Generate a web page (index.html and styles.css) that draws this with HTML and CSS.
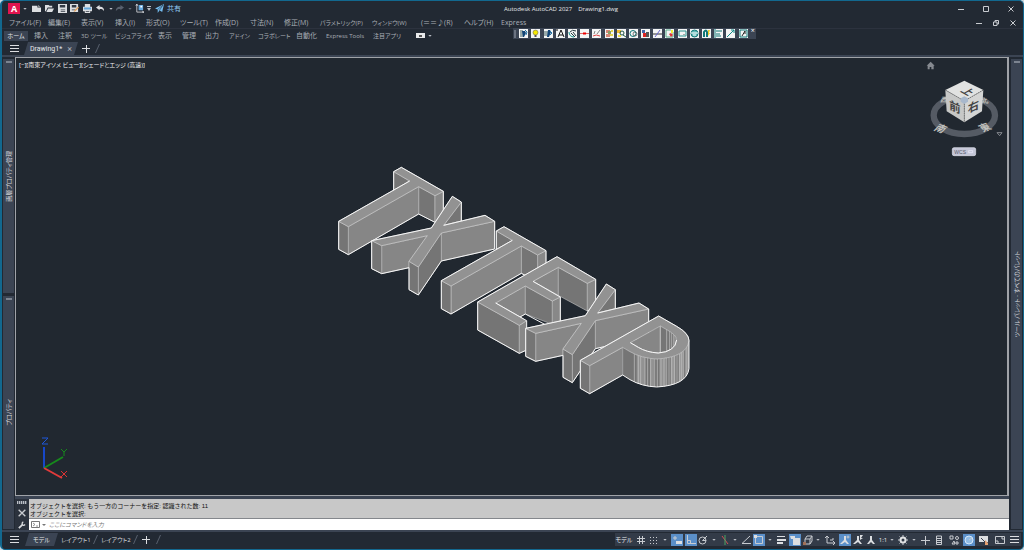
FILE: index.html
```html
<!DOCTYPE html>
<html lang="ja">
<head>
    <meta charset="UTF-8">
    <title>Autodesk AutoCAD 2027 Drawing1.dwg</title>
    <link rel="stylesheet" href="styles.css">
</head>
<body>
<div class="window">
    <header class="titlebar">
        <div class="quick">
            <button class="logo" aria-label="アプリケーション">A</button>
            <i class="caret"></i>
            <button aria-label="新規"><svg viewBox="0 0 10 10"><path class="w" d="M0 2h6v2h4v5H0z"/><path class="w" d="M7 1l2 2H7z"/></svg></button>
            <button aria-label="開く"><svg viewBox="0 0 10 10"><path class="w" d="M0 1h4l1 1h3v2H3L1 8H0zM3.500 5H10L8 9H1.500z"/></svg></button>
            <button aria-label="保存"><svg viewBox="0 0 10 10"><path class="w" d="M0 0h10v10H0z"/><path class="d" d="M2 1h6v3H2zM3 6h5v1H3zM3 8h5v1H3z"/></svg></button>
            <button aria-label="名前を付けて保存"><svg viewBox="0 0 10 10"><path class="w" d="M0 0h9v9H0z"/><path class="d" d="M2 1h5v3H2zM2 6h4v1H2z"/><path d="M4 9l1-2 4-4 1 1-4 4z" fill="#e3a15c"/></svg></button>
            <button aria-label="印刷"><svg viewBox="0 0 10 10"><path class="w" d="M2 0h6v3h2v5H8v2H2V8H0V3h2z"/><path d="M1 4h8v2H1z" fill="#65a9df"/><path class="d" d="M3 8h4v1H3z"/></svg></button>
            <button aria-label="元に戻す"><svg viewBox="0 0 10 10"><path class="w" d="M0 4l4-3v2c4 0 5 2 5 5C8 6 7 5.500 4 5.500V7z"/></svg></button>
            <i class="caret"></i>
            <button aria-label="やり直し"><svg viewBox="0 0 10 10"><path fill="#59616e" d="M10 4L6 1v2C2 3 1 5 1 8c1-2 2-2.500 5-2.500V7z"/></svg></button>
            <i class="caret dim"></i>
            <button aria-label="座標"><svg viewBox="0 0 10 10"><path class="l" d="M2 0v9h8M1 2l1-2 1 2M8 8l2 1-2 1"/><path d="M4 1h5v6H4z" fill="#65a9df"/><path d="M6 2h2v2H6z" fill="#fff"/></svg></button>
            <i class="caret bar"></i>
            <a class="share" href="#"><svg viewBox="0 0 10 10"><path fill="#74bdf0" d="M0 5l10-5-2 9-3-2-2 3V6z"/><path stroke="#222933" stroke-width=".6" d="M3 6l6-5-4 6"/></svg>共有</a>
        </div>
        <div class="caption"><span>Autodesk AutoCAD 2027</span><span>Drawing1.dwg</span></div>
        <div class="winbtns">
            <button aria-label="最小化"><svg viewBox="0 0 6 6"><path class="l" d="M0 3.500h6"/></svg></button>
            <button aria-label="最大化"><svg viewBox="0 0 6 6"><path class="l" d="M.5.5h5v5h-5z"/></svg></button>
            <button aria-label="閉じる"><svg viewBox="0 0 6 6"><path class="l" d="M.5.5l5 5m0-5l-5 5"/></svg></button>
        </div>
    </header>

    <nav class="menubar">
        <a href="#">ファイル(F)</a><a href="#">編集(E)</a><a href="#">表示(V)</a><a href="#">挿入(I)</a><a href="#">形式(O)</a><a href="#">ツール(T)</a><a href="#">作成(D)</a><a href="#">寸法(N)</a><a href="#">修正(M)</a><a class="kana" href="#">パラメトリック(P)</a><a class="kana" href="#">ウィンドウ(W)</a><a href="#">(＝＝♪(R)</a><a href="#">ヘルプ(H)</a><a href="#">Express</a>
        <div class="winbtns small">
            <button aria-label="図面を最小化"><svg viewBox="0 0 6 6"><path class="l" d="M0 3.500h6"/></svg></button>
            <button aria-label="図面を元に戻す"><svg viewBox="0 0 6 6"><path class="l" d="M.5 2h3.500v3.500H.5zM2 2V.5h3.500V4H4"/></svg></button>
            <button aria-label="図面を閉じる"><svg viewBox="0 0 6 6"><path class="l" d="M.5.5l5 5m0-5l-5 5"/></svg></button>
        </div>
    </nav>

    <nav class="ribbon">
        <a class="on" href="#">ホーム</a><a href="#">挿入</a><a href="#">注釈</a><a class="kana" href="#">3D ツール</a><a class="kana" href="#">ビジュアライズ</a><a href="#">表示</a><a href="#">管理</a><a href="#">出力</a><a class="kana" href="#">アドイン</a><a class="kana" href="#">コラボレート</a><a href="#">自動化</a><a class="kana" href="#">Express Tools</a><a class="kana" href="#">注目アプリ</a>
        <button class="panelbtn" aria-label="パネル表示"><i></i></button><i class="caret"></i>
        <div class="toolbar">
            <i class="grip"></i>
            <button aria-label="画層オフ"><svg viewBox="0 0 9 9"><path d="M1 1h3v7H1z" fill="#9aa"/><path d="M3 2h3l1 2-2 4H4z" fill="#147"/><path d="M6 1l2 2-1 3" stroke="#27a"/></svg></button>
            <button aria-label="画層オン"><svg viewBox="0 0 9 9"><circle cx="4.500" cy="3.500" r="2.500" fill="#f6e800" stroke="#555" stroke-width=".5"/><path d="M3.500 6h2v2h-2z" fill="#555"/></svg></button>
            <button aria-label="画層表示"><svg viewBox="0 0 9 9"><path d="M0 2h4v5H0z" fill="#9aa"/><path d="M4 1h2l1 2-2 5H3z" fill="#147"/><path d="M6 2l2 2-2 2" stroke="#27a"/></svg></button>
            <button aria-label="文字"><svg viewBox="0 0 9 9"><path d="M2 8l3-7 3 7M3 6h4" stroke="#111"/><path d="M0 1h2M1 0v2" stroke="#111" stroke-width=".6"/></svg></button>
            <button aria-label="文字フィット"><svg viewBox="0 0 9 9"><path d="M2 3q2-3 6-1M3 4l4 4M5 3l3 4" stroke="#263b40"/><path d="M1 3c0 3 2 5 5 5" stroke="#17938c"/></svg></button>
            <button aria-label="文字マスク"><svg viewBox="0 0 9 9"><path d="M0 4.500h9" stroke="#d66"/><path d="M3 3.500h3v2H3z" fill="#e00"/></svg></button>
            <button aria-label="弧に沿う文字"><svg viewBox="0 0 9 9"><path d="M2 5l1-3M5 5l3-4" stroke="#555" stroke-width=".7"/><path d="M1 7q3-2 7 0" stroke="#d44"/></svg></button>
            <button aria-label="属性"><svg viewBox="0 0 9 9"><path d="M1 1h4v3H1zM1 5h4v3H1z" fill="#d88777"/><path d="M6 1h2v2H6zM5 5h3v2H5z" fill="#e5d44c"/><path d="M3 2h3v3H3z" fill="#8a9e66"/></svg></button>
            <button aria-label="検索"><svg viewBox="0 0 9 9"><path d="M0 1h4v3H0z" fill="#eb3"/><circle cx="5" cy="4" r="2" stroke="#254"/><path d="M6 6l3 2" stroke="#254"/><path d="M1 6h3v2H1z" fill="#ed4"/></svg></button>
            <button aria-label="回転"><svg viewBox="0 0 9 9"><circle cx="4" cy="4.500" r="3" stroke="#177"/><circle cx="6" cy="5" r="2" stroke="#444" stroke-width=".7"/></svg></button>
            <button aria-label="ブロック"><svg viewBox="0 0 9 9"><path d="M1 1h3v3H1z" fill="#46a"/><path d="M2 4h4v4H2z" fill="#d22"/><path d="M5 3h3v5H5z" fill="#555"/></svg></button>
            <button aria-label="トリム"><svg viewBox="0 0 9 9"><path d="M0 5h9" stroke="#333"/><path d="M2 8l5-7" stroke="#66c"/></svg></button>
            <button aria-label="クリップ"><svg viewBox="0 0 9 9"><path d="M1 1h5l2 2v5H1z" stroke="#5a8"/><path d="M4 5l2-1 2 2-2 2z" fill="#d33"/><path d="M6 1h2v3H6z" fill="#ee3"/></svg></button>
            <button aria-label="ワイプアウト"><svg viewBox="0 0 9 9"><path d="M1 2h7v5H1z" stroke="#2a9490"/><path d="M5 5h2v1H5z" fill="#aaa"/></svg></button>
            <button aria-label="雲マーク"><svg viewBox="0 0 9 9"><circle cx="4.500" cy="4.500" r="3.500" fill="#6bb" stroke="#177"/><path d="M1 4h7M3 6h3" stroke="#fff"/></svg></button>
            <button aria-label="マグネット"><svg viewBox="0 0 9 9"><path d="M2 8V3q2-3 3 0v5" stroke="#177" stroke-width="2"/><path d="M6 1h2L7 4h1L6 7z" fill="#ec2"/></svg></button>
            <button aria-label="位置合わせ"><svg viewBox="0 0 9 9"><path d="M1 0v9M2 2h6M2 5h4M2 7h5" stroke="#177"/></svg></button>
            <button aria-label="延長"><svg viewBox="0 0 9 9"><path d="M1 8l7-7M5 1h3v3" stroke="#188"/></svg></button>
            <button aria-label="コマンド別名"><svg viewBox="0 0 9 9"><path d="M1 1h7v7H1z" stroke="#177"/><path d="M3 7l3-5v3" stroke="#222"/></svg></button>
            <button class="tbclose" aria-label="ツールバーを閉じる">×</button>
        </div>
    </nav>

    <nav class="filetabs">
        <button class="burger" aria-label="メニュー"><i></i><i></i><i></i></button>
        <a class="tab on drawing" href="#"><span>Drawing1*</span><b>×</b></a>
        <button class="plus" aria-label="新しいタブ"></button>
        <i class="slash"></i>
    </nav>

    <main class="work">
        <aside class="dock left">
            <section class="palette"><i class="handle"></i><h2>画層プロパティ管理</h2></section>
            <section class="palette second"><i class="handle"></i><h2>プロパティ</h2></section>
        </aside>

        <section class="view">
            <div class="vplabel">[−][南東アイソメ ビュー][シェードとエッジ (高速)]</div>

            <!-- extruded letters, southeast isometric -->
            <svg class="model" viewBox="18 3 1056 696">
                <defs>
                    <g id="letterT">
                        <path class="dark" d="M191 35l48 28-48 28z"/>
                        <path class="dark" d="M266 80l49 27v80l-49-25z"/>
                        <path class="mid" d="M315 107l25-13v79l-25 14z"/>
                        <path class="side" d="M55 200L266 80v82L55 284z"/>
                        <path class="dark" d="M26 184l29 16v84l-29-16z"/>
                        <path class="top" d="M26 184L239 63l-48-28 23-13 126 72-25 13-49-27L55 200z"/>
                        <path class="rim" d="M340 173V94L214 22l-23 13v56M239 63L26 184v84l29 16 211-122 49 25"/>
                    </g>
                    <g id="letterX">
                        <path class="dark" d="M394 126l-53 70 53-13z"/>
                        <path class="side" d="M334 219l160-35v83l-160 36z"/>
                        <path class="side" d="M155 257l137-30-55 77v19l-82 18z"/>
                        <path class="dark" d="M125 242l30 15v84l-30-15z"/>
                        <path class="dark" d="M265 321l69-102v84l-69 102z"/>
                        <path class="dark" d="M237 304l28 17v84l-28-16z"/>
                        <path class="top" d="M125 242l179-38 63-95 27 17-53 70 124-30 29 18-160 35-69 102-28-17 55-77-137 30z"/>
                        <path class="rim" d="M394 183v-57l-27-17-63 95-179 38v84l30 15 82-18v66l28 16 69-102 160-36v-83l-29-18-124 30"/>
                    </g>
                    <clipPath id="bowl"><path d="M458 382l22 13q35 20 80 22 90-5 97-55v84q-7 50-97 55-45-2-80-22l-22-14z"/></clipPath>
                    <clipPath id="hole"><path d="M481 368l90-50 21 12q28 15 28 30-4 35-55 39-35-2-60-17z"/></clipPath>
                </defs>

                <use href="#letterT"/>
                <use href="#letterX"/>
                <use href="#letterT" x="308" y="178"/>

                <g transform="translate(420 180)">
                    <path class="side" d="M189 184l76-42v84z"/>
                    <path class="dark" d="M265 142l87 48v83l-87-47z"/>
                    <path class="mid" d="M352 190l25-12v82l-25 13z"/>
                    <path class="side" d="M77 249l89-51v84l-16 9z"/>
                    <path class="dark" d="M166 198l81 45v70l-81-31z"/>
                    <path class="mid" d="M247 243l24-12v74l-24 8z"/>
                    <path class="dark" d="M23 246l125 70v84L23 330z"/>
                    <path class="mid" d="M148 316l22-14v88l-22 10z"/>
                    <path class="top" d="M23 246l238-136 116 68-25 12-87-48-76 42 82 47-24 12-81-45-89 51 93 53-22 14z"/>
                    <path class="gap" d="M156 292l10-8 58 30-54 13v-25z"/>
                    <path class="rim" d="M23 330v-84l238-136 116 68v82l-25 13M189 184l82 47v74M77 249l93 53v88l-22 10-125-70M150 291l16-9 60 32"/>
                </g>

                <use href="#letterX" x="462" y="263"/>

                <g transform="translate(420 180)">
                    <g clip-path="url(#bowl)">
                        <path class="dark" d="M450 300h210v220H450z"/>
                        <path d="M500 300h25v220h-25zM540 300h12v220h-12zM568 300h20v220h-20z" fill="#929292"/>
                        <path d="M602 300h14v220h-14zM626 300h14v220h-14zM647 300h10v220h-10z" fill="#999"/>
                        <path class="rib" d="M493 300v220m12-220v220m7-220v220m13-220v220m8-220v220m9-220v220m12-220v220m8-220v220m11-220v220m9-220v220m8-220v220m7-220v220m8-220v220m9-220v220m7-220v220m8-220v220m6-220v220m6-220v220m7-220v220"/>
                    </g>
                    <g clip-path="url(#hole)">
                        <path class="side" d="M475 310h96v90h-96z"/>
                        <path class="dark" d="M571 310h55v90h-55z"/>
                        <path class="rib" d="M571 310v90m19-90v90m9-90v90m6-90v90m6-90v90m4-90v90"/>
                    </g>
                    <path class="side" d="M359 437l99-55v83l-99 56z"/>
                    <path class="dark" d="M331 421l28 16v84l-28-16z"/>
                    <path class="top" fill-rule="evenodd" d="M331 421l235-133 54 31q37 21 37 43-7 50-97 55-45-2-80-22l-22-13-99 55zM481 368l24 14q25 15 60 17 51-4 55-39 0-15-28-30l-21-12z"/>
                    <path class="rim" d="M331 421l235-133 54 31q37 21 37 43v84q-7 50-97 55-45-2-80-22l-22-14-99 56-28-16zM481 368l24 14q25 15 60 17 51-4 55-39"/>
                </g>
            </svg>

            <!-- view cube and compass -->
            <svg class="cube" viewBox="84 20 228 306">
                <path fill="#868a90" d="M80 49l12-12 12 12h-3v11h-7v-7h-5v7h-6V49z"/>
                <ellipse cx="193" cy="198" rx="92" ry="56" fill="none" stroke="#555b64" stroke-width="19"/>
                <g class="compass">
                    <text transform="translate(120 158) skewX(-20)" font-size="20">西</text>
                    <text transform="translate(246 160) skewX(20)" font-size="20">北</text>
                    <text transform="translate(100 241) rotate(20) skewX(-24)" font-size="30">南</text>
                    <text transform="translate(249 248) rotate(-20) skewX(24)" font-size="30">東</text>
                </g>
                <path fill="#e1e2e1" d="M136 122l57-28 57 28-57 33z"/>
                <path fill="#c7c8c7" d="M136 122l57 33v64l-53-33z"/>
                <path fill="#d4d5d4" d="M250 122l-57 33v64l53-33z"/>
                <path d="M136 122l57 33 57-33M193 155v64" fill="none" stroke="#555" stroke-width="2" stroke-dasharray="5 2"/>
                <path fill="#a8b8cc" d="M182 147l11-6 11 6v10l-11 7-11-7z"/>
                <g class="face">
                    <text transform="translate(148 178) skewY(24)" font-size="34">前</text>
                    <text transform="translate(203 192) skewY(-24)" font-size="34">右</text>
                    <text transform="translate(180 126) rotate(30) skewX(-30)" font-size="29">上</text>
                </g>
                <path fill="none" stroke="#868a90" stroke-width="3" d="M291 250h15l-7 9z"/>
                <rect x="157" y="295" width="70" height="24" rx="5" fill="#c5c7d8" stroke="#e3e4ee" stroke-width="2"/>
                <text class="wcs" x="163" y="313">WCS</text>
                <path d="M206 304h12v6h-12z" fill="none" stroke="#eef" stroke-width="2"/>
            </svg>

            <svg class="ucs" viewBox="0 0 30 44">
                <path stroke="#1747c8" stroke-width="2" d="M4 31V10"/>
                <path stroke="#168a1c" stroke-width="2" d="M4 31l19-11"/>
                <path stroke="#e23b3b" stroke-width="2" d="M4 31l18 10"/>
                <path stroke="#1f56d8" d="M2 1h6L2 7h6"/>
                <path stroke="#168a1c" d="M21 12l3 3 3-3M24 15v4"/>
                <path stroke="#d33" d="M21 34l6 6m0-6l-6 6"/>
            </svg>
        </section>

        <aside class="dock right">
            <section class="palette"><i class="handle"></i><h2>ツール パレット - すべてのパレット</h2></section>
        </aside>

        <section class="command">
            <div class="cmdtools">
                <i class="grip"></i>
                <button aria-label="閉じる"><svg viewBox="0 0 6 6"><path class="l" d="M.5.5l5 5m0-5l-5 5"/></svg></button>
                <button aria-label="カスタマイズ"><svg viewBox="0 0 9 9"><path d="M1 8l4-4" stroke="#d8dadd" stroke-width="2"/><path d="M6 1q-2 1-1 3t3 0" stroke="#d8dadd" stroke-width="1.500"/></svg></button>
            </div>
            <div class="cmdbody">
                <div class="history">
                    <p>オブジェクトを選択: もう一方のコーナーを指定: 認識された数: 11</p>
                    <p>オブジェクトを選択:</p>
                </div>
                <label class="prompt">
                    <svg viewBox="0 0 15 9"><path d="M.5 1.500h8v6h-8z" stroke="#777"/><path d="M2 3l2 1.500L2 6M5 6h2" stroke="#777" stroke-width=".8"/><path d="M11 4h4l-2 2z" fill="#777"/></svg>
                    <input type="text" aria-label="コマンド" placeholder="ここにコマンドを入力">
                </label>
            </div>
        </section>
    </main>

    <footer class="status">
        <nav class="layouts">
            <button class="burger" aria-label="レイアウト一覧"><i></i><i></i><i></i></button>
            <a class="tab on" href="#"><span>モデル</span></a>
            <a class="layout" href="#">レイアウト1</a><i class="slash"></i>
            <a class="layout" href="#">レイアウト2</a><i class="slash"></i>
            <button class="plus" aria-label="新しいレイアウト"></button><i class="slash"></i>
        </nav>
        <div class="toggles">
            <button class="txt">モデル</button>
            <button aria-label="グリッド"><svg viewBox="0 0 10 10"><path class="l" d="M3.500 1v8M6.500 1v8M1 3.500h8M1 6.500h8"/></svg></button>
            <button aria-label="スナップ"><svg viewBox="0 0 10 10"><path class="l" stroke-dasharray="1 2" d="M1 2.500h8M1 5.500h8M1 8.500h8"/></svg></button>
            <i class="caret"></i>
            <button class="lit" aria-label="ダイナミック入力"><svg viewBox="0 0 10 10"><path class="l" d="M1 3h4M3 1v4"/><path class="w" d="M4 6h6v3H4z"/></svg></button>
            <button class="lit" aria-label="直交モード"><svg viewBox="0 0 10 10"><path class="l" d="M1.500 0v8.500H10M1.500 5.500h3v3"/></svg></button>
            <button aria-label="極トラッキング"><svg viewBox="0 0 10 10"><circle class="l" cx="4.500" cy="5.500" r="3.500"/><path class="l" d="M9 1L4.500 5.500H8"/></svg></button>
            <i class="caret"></i>
            <button aria-label="アイソメ作図"><svg viewBox="0 0 10 10"><path d="M2 1l6 8" stroke="#d34e55"/><path d="M5 0v10" stroke="#4aa565"/></svg></button>
            <i class="caret"></i>
            <button aria-label="トラッキング"><svg viewBox="0 0 10 10"><path class="l" d="M9 1L1 8.500h9"/></svg></button>
            <button class="lit" aria-label="オブジェクトスナップ"><svg viewBox="0 0 10 10"><path class="l" d="M1.500 1.500h7v7h-7z"/><path class="w" d="M0 0h3v3H0z"/></svg></button>
            <i class="caret"></i>
            <button aria-label="線の太さ"><svg viewBox="0 0 10 10"><path class="w" d="M1 1h8v1H1zM1 4h9v2H1zM1 7h6v2H1z"/></svg></button>
            <button class="lit" aria-label="選択の循環"><svg viewBox="0 0 10 10"><path class="w" d="M3 3h7v7H3zM0 1h5v3H1z"/></svg></button>
            <button aria-label="3D スナップ"><svg viewBox="0 0 10 10"><path class="l" d="M2 4h5v5H2zM2 4l2-3h5L7 4M9 1v5L7 9"/><path d="M0 7h3v3H0z" fill="#a07058"/></svg></button>
            <i class="caret"></i>
            <button aria-label="ダイナミック UCS"><svg viewBox="0 0 10 10"><path class="l" d="M2 1v7h8M0 3l2-2 2 2M5 5h3V3M8 6l2 2-2 2"/></svg></button>
            <button class="lit" aria-label="注釈の表示"><svg viewBox="0 0 10 10"><path class="w" d="M4 1h2v4l3 4H7L5 7 2 9H0l4-4z"/><circle class="l" cx="8" cy="2" r="1"/></svg></button>
            <button aria-label="自動尺度"><svg viewBox="0 0 10 10"><path class="w" d="M4 1h2v4l3 4H7L5 7 2 9H0l4-4zM7 0h3L8 3h2L7 5z"/></svg></button>
            <button aria-label="注釈尺度"><svg viewBox="0 0 10 10"><path class="w" d="M4 1h2v4l3 4H7L5 7 3 9H1l3-4z"/></svg></button>
            <button class="txt scale">1:1</button>
            <i class="caret"></i>
            <button aria-label="ワークスペース"><svg viewBox="0 0 10 10"><circle cx="5" cy="5" r="2.500" stroke="#e1e2e4" stroke-width="2"/><path class="l" d="M5 0v2M5 8v2M0 5h2M8 5h2M1.500 1.500l1 1M7.500 7.500l1 1M1.500 8.500l1-1M7.500 2.500l1-1"/></svg></button>
            <i class="caret"></i>
            <button aria-label="注釈モニター"><svg viewBox="0 0 10 10"><path class="l" d="M5.500 1v9M1 5.500h9"/></svg></button>
            <button aria-label="クイックプロパティ"><svg viewBox="0 0 10 10"><path class="l" d="M2.500 1v8.500h5V1zM2 3.500h6M2 5.500h6M2 7.500h6"/></svg></button>
            <button aria-label="オブジェクト選択表示"><svg viewBox="0 0 10 10"><path class="l" d="M1 1h3v3H1zM3 9l2-3 1 3z"/><circle class="l" cx="8" cy="3" r="1.500"/><path class="l" d="M7 7h2v2H7z"/></svg></button>
            <button class="lit" aria-label="グラフィックス"><svg viewBox="0 0 10 10"><circle cx="5" cy="5" r="4" fill="#91bce5" stroke="#d8e9fa"/><path class="l" d="M5 5l3-2"/></svg></button>
            <button aria-label="画面クリーン"><svg viewBox="0 0 10 10"><path class="w" d="M0 1h9v6H0z"/><path d="M2 3l4 4" stroke="#3b4453"/><path d="M6 5l3 3v2H6z" fill="#e6a070"/></svg></button>
            <button aria-label="フルスクリーン"><svg viewBox="0 0 10 10"><path class="l" d="M.5 1.500h9v7h-9zM2 5v2h2M6 3h2v2"/></svg></button>
            <button class="burger" aria-label="カスタマイズ"><i></i><i></i><i></i></button>
        </div>
    </footer>
</div>
</body>
</html>
```

FILE: styles.css
```css
* {
    box-sizing: border-box;
}
body {
    margin: 0;
    background: #c9d6de;
    font-family: "Open Sans", "Noto Sans CJK JP", sans-serif;
    font-size: 7px;
    line-height: 10px;
    color: #b9bdc4;
    font-feature-settings: "palt";
}
a {
    color: inherit;
    text-decoration: none;
    white-space: nowrap;
}
button {
    display: flex;
    align-items: center;
    justify-content: center;
    padding: 0;
    border: 0;
    background: none;
    color: inherit;
    font: inherit;
}
svg {
    display: block;
    fill: none;
}
.w { fill: #dcdee1; }
.d { fill: #353c47; }
.l { fill: none; stroke: #c8cbd0; }
.kana { font-size: 6px; }
.window {
    display: flex;
    flex-direction: column;
    height: 100vh;
    background: #222933;
    border: 1px solid #12688f;
    border-left-width: 2px;
    border-radius: 5px;
    overflow: hidden;
}
.caret {
    flex: none;
    width: 4px;
    height: 2px;
    background: #b9bdc4;
    clip-path: polygon(0 0, 100% 0, 60% 100%, 40% 100%);
}
.caret.dim { background: #656c77; }
.caret.bar {
    height: 5px;
    clip-path: polygon(0 0, 100% 0, 100% 20%, 0 20%, 0 40%, 100% 40%, 50% 100%, 0 40%);
}

/* title bar */
.titlebar {
    display: grid;
    grid-template-columns: 49% auto 1fr;
    align-items: center;
    height: 15px;
    padding: 0 9px 0 6px;
}
.quick {
    display: grid;
    grid-template-columns: 15px 9px 13px 13px 12px 13px 13px 13px 6px 13px 7px 12px 8px 24px;
    align-items: center;
}
.quick svg {
    width: 9px;
    height: 9px;
}
.quick button {
    justify-content: flex-start;
}
.quick .logo {
    width: 12px;
    height: 11px;
    justify-content: center;
    background: #e2144f;
    color: #fff;
    font-weight: bold;
    font-size: 9px;
}
.share {
    display: flex;
    align-items: center;
    gap: 3px;
    color: #91c9f2;
}
.share svg { flex: none; }
.caption {
    display: flex;
    gap: 6px;
    padding-left: 3px;
    color: #e6e8ea;
    font-size: 6px;
}
.winbtns {
    display: flex;
    justify-content: flex-end;
    gap: 19px;
}
.winbtns svg {
    width: 6px;
    height: 6px;
}
.winbtns.small {
    gap: 11px;
}

/* menus */
.menubar {
    display: grid;
    grid-template-columns: 39px 33px 34px 31px 34px 35px 35px 34px 36px 52px 49px 43px 37px 40px 1fr;
    align-items: center;
    height: 13px;
    padding: 1px 7px 0;
    border-bottom: 1px solid #2c323e;
    color: #a9aeb5;
}
.ribbon {
    position: relative;
    display: grid;
    grid-template-columns: 30px 24px 23px 34px 43px 24px 23px 24px 29px 38px 30px 47px 43px 12px 8px;
    align-items: center;
    height: 13px;
    padding-left: 2px;
    color: #a9aeb5;
}
.ribbon .on {
    justify-self: start;
    width: 24px;
    background: #3b4453;
    color: #e1e3e6;
    font-size: 6px;
    text-align: center;
}
.panelbtn {
    width: 9px;
    height: 5px;
    background: #e8e9eb;
}
.panelbtn i {
    width: 3px;
    height: 2px;
    background: #555;
}
/* floating express toolbar, sits across the ribbon edge */
.toolbar {
    position: absolute;
    left: 511px;
    top: -1px;
    display: flex;
    align-items: center;
    justify-content: space-between;
    width: 243px;
    height: 11px;
    padding: 0 1px;
    background: #3b4453;
}
.toolbar .grip {
    width: 2px;
    height: 8px;
    background: #6b7381;
}
.toolbar button {
    width: 9px;
    height: 9px;
    background: #f4f5f5;
}
.toolbar svg {
    width: 9px;
    height: 9px;
}
.toolbar .tbclose {
    align-self: flex-start;
    width: 4px;
    height: 5px;
    background: none;
    color: #fff;
}

/* drawing tabs */
.filetabs,
.layouts {
    display: flex;
    align-items: center;
}
.filetabs {
    height: 13px;
    padding-left: 8px;
}
.burger {
    flex-direction: column;
    gap: 2px;
    width: 9px;
}
.burger i {
    width: 9px;
    height: 1px;
    background: #dcdee1;
}
.tab {
    display: flex;
    align-items: center;
    justify-content: center;
    gap: 5px;
    height: 13px;
    background: #3b4453;
    color: #e6e8ea;
    clip-path: polygon(4px 0, 100% 0, calc(100% - 4px) 100%, 0 100%);
}
.tab b {
    color: #aeb3ba;
    font-size: 9px;
    font-weight: normal;
}
.drawing {
    width: 54px;
    margin: 0 4px 0 5px;
    font-family: Roboto, sans-serif;
}
.plus {
    width: 8px;
    height: 8px;
    background:
        linear-gradient(#dcdee1, #dcdee1) center / 8px 1px no-repeat,
        linear-gradient(#dcdee1, #dcdee1) center / 1px 8px no-repeat;
}
.slash {
    width: 5px;
    height: 9px;
    background: #59616e;
    clip-path: polygon(80% 0, 100% 0, 20% 100%, 0 100%);
}
.filetabs .slash { margin-left: 5px; }

/* work area */
.work {
    flex: 1;
    display: grid;
    grid-template-columns: 13px 1fr 14px;
    grid-template-rows: 1fr 34px;
    min-height: 0;
    border-top: 2px solid #3b4453;
    border-bottom: 2px solid #3b4453;
}
.dock {
    display: flex;
    flex-direction: column;
    gap: 3px;
    grid-row: 1 / 3;
    padding: 2px 1px 1px;
}
.dock.left { grid-column: 1; }
.dock.right {
    grid-column: 3;
    padding-left: 2px;
}
.palette {
    flex: 233;
    position: relative;
    display: flex;
    align-items: center;
    justify-content: center;
    background: #3b4453;
}
.palette.second { flex: 232; }
.handle {
    position: absolute;
    top: 2px;
    left: 3px;
    width: 6px;
    height: 2px;
    background: #7c8490;
}
.palette h2 {
    margin: 0;
    font-size: 6px;
    font-weight: normal;
    color: #d5d8dc;
    white-space: nowrap;
    writing-mode: vertical-rl;
    text-orientation: sideways;
    transform: rotate(180deg);
}
.view {
    grid-column: 2;
    grid-row: 1;
    position: relative;
    display: grid;
    place-items: center;
    border: 1px solid #a0a3a8;
    border-right-width: 2px;
    background: #212830;
}
.vplabel {
    position: absolute;
    left: 3px;
    top: 2px;
    color: #f0f1f2;
    font-size: 6px;
}
.model {
    width: 352px;
    height: 232px;
    overflow: visible;
    stroke-linejoin: round;
}
.model .top { fill: #929292; stroke: #d2d2d2; stroke-width: 2; }
.model .side { fill: #868686; stroke: #c0c0c0; stroke-width: 2; }
.model .mid { fill: #888; stroke: #c0c0c0; stroke-width: 2; }
.model .dark { fill: #757575; stroke: #c0c0c0; stroke-width: 2; }
.model .rim { stroke: #f6f6f6; stroke-width: 3; }
.model .rib { stroke: #c4c4c4; stroke-width: 2; }
.model .gap { fill: #212830; }
.cube {
    position: absolute;
    right: 3px;
    top: -2px;
    width: 76px;
    height: 102px;
    overflow: visible;
}
.cube text { font-family: "Noto Sans CJK JP", sans-serif; }
.compass { fill: #c2c2be; font-weight: bold; }
.face { fill: #444; font-weight: bold; }
.cube .wcs {
    fill: #555a6a;
    font-size: 15px;
    font-family: "Liberation Sans", sans-serif;
}
.ucs {
    position: absolute;
    left: 24px;
    bottom: 14px;
    width: 30px;
    height: 44px;
}

/* command line */
.command {
    grid-column: 2;
    grid-row: 2;
    display: flex;
    border-top: 3px solid #3b4453;
}
.cmdtools {
    display: flex;
    flex-direction: column;
    align-items: center;
    justify-content: space-between;
    width: 14px;
    padding: 2px 0 1px;
    background: #2b323d;
}
.cmdtools .grip {
    width: 10px;
    height: 3px;
    background: repeating-linear-gradient(90deg, #b9bdc4 0 1px, #59616e 1px 2px);
}
.cmdtools svg { width: 8px; height: 8px; }
.cmdbody {
    flex: 1;
    display: flex;
    flex-direction: column;
}
.history {
    display: flex;
    flex-direction: column;
    justify-content: flex-end;
    height: 20px;
    background: #c8c8c8;
    border-bottom: 1px solid #84878c;
    color: #111;
    font-family: "Liberation Sans", "Noto Sans CJK JP", sans-serif;
    font-size: 6px;
    line-height: 8px;
    font-feature-settings: normal;
}
.history p {
    margin: 0 1px;
}
.prompt {
    flex: 1;
    display: flex;
    align-items: center;
    gap: 3px;
    padding-left: 2px;
    background: #fff;
}
.prompt svg {
    width: 15px;
    height: 9px;
}
.prompt input {
    flex: 1;
    height: 10px;
    padding: 0;
    border: 0;
    outline: 0;
    background: none;
    font: italic 6px "Noto Sans CJK JP", sans-serif;
    font-feature-settings: "palt";
}
.prompt input::placeholder {
    color: #777;
}

/* status bar */
.status {
    display: flex;
    justify-content: space-between;
    align-items: center;
    height: 17px;
    padding: 0 2px 2px 8px;
}
.layouts .tab {
    width: 33px;
    margin: 0 3px 0 6px;
}
.layout {
    width: 30px;
    color: #d5d8dc;
}
.layouts .slash { margin: 0 3px 0 2px; }
.layouts .plus { margin: 0 4px 0 1px; }
.layouts a { font-size: 6px; }
.toggles {
    display: grid;
    grid-template-columns: 20px 13px 13px 10px 14px 12px 13px 9px 12px 9px 13px 13px 9px 14px 13px 12px 10px 15px 13px 13px 13px 10px 9px 13px 9px 14px 15px 15px 15px 16px 14px 13px;
    align-items: center;
    height: 13px;
    background: #333b48;
}
.toggles > * {
    justify-self: start;
}
.toggles .caret {
    margin-left: 2px;
}
.toggles button {
    width: 12px;
    height: 12px;
}
.toggles svg {
    width: 10px;
    height: 10px;
}
.toggles .txt {
    width: 18px;
    color: #eceef0;
    font-size: 6px;
}
.toggles .scale { width: 10px; }
.toggles .lit { background: #5b8fc8; }
```
